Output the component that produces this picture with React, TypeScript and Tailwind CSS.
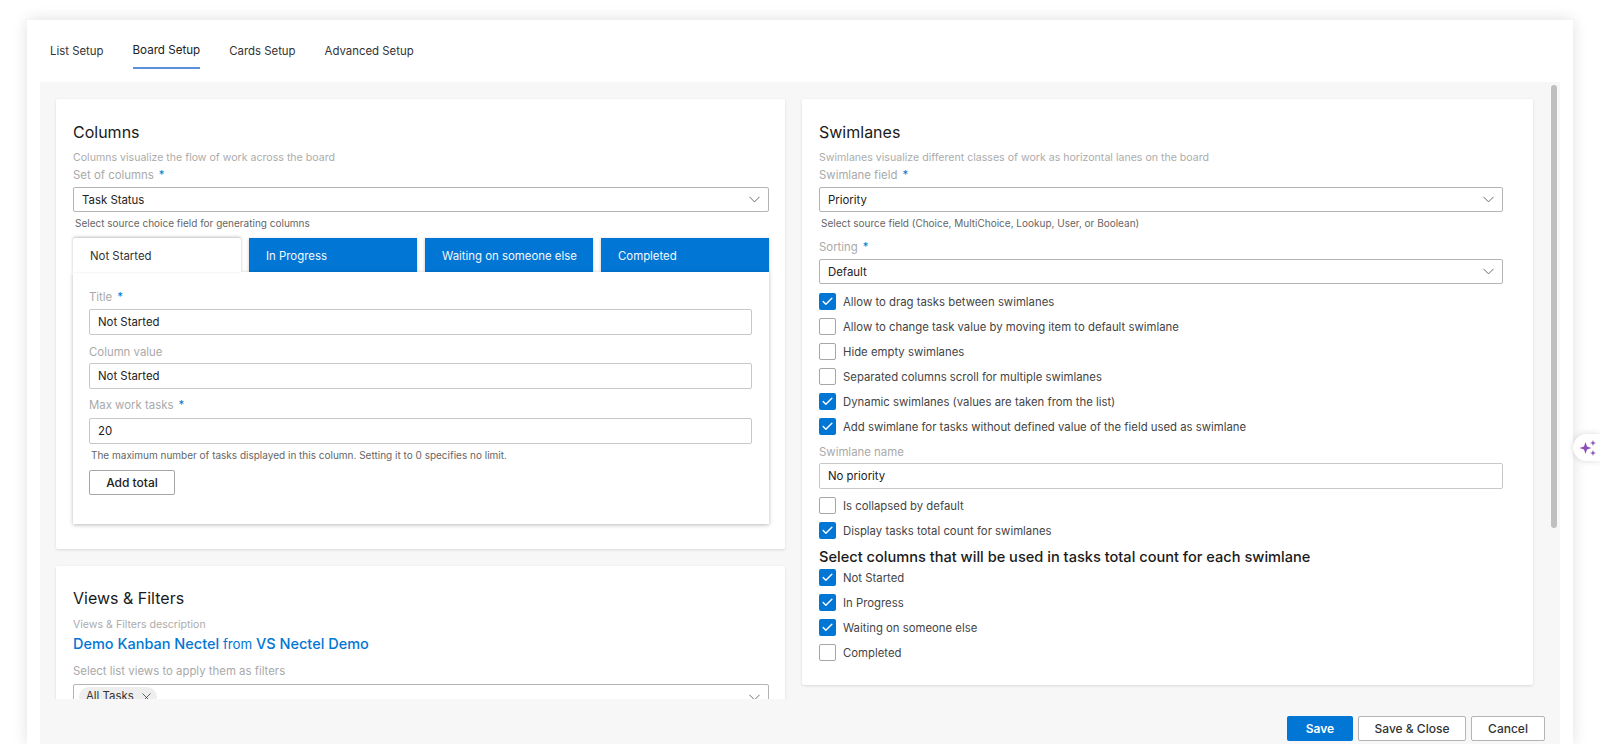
import { ChevronDown, X, Check } from "lucide-react";

function Label({ text, required }: { text: string; required?: boolean }) {
  return (
    <div className="text-[11.4px] leading-[16px] text-[#a9a9a9]">
      {text}
      {required && <span className="ml-[5px] text-[#0078d4]">*</span>}
    </div>
  );
}

function Field({ value }: { value: string }) {
  return (
    <div className="h-[26px] rounded-[2px] border border-[#c8c8c8] bg-white px-[8px] text-[11.4px] leading-[24px] text-[#222]">
      {value}
    </div>
  );
}

function Select({ value }: { value: string }) {
  return (
    <div className="flex h-[25px] items-center justify-between rounded-[2px] border border-[#b4b4b4] bg-white pl-[8px] pr-[4px] text-[11.4px] text-[#222]">
      <span className="mt-[2px]">{value}</span>
      <ChevronDown size={19} strokeWidth={1} className="text-[#444]" />
    </div>
  );
}

function Help({ text }: { text: string }) {
  return <div className="mt-[3px] pl-[2px] text-[10px] leading-[16px] text-[#666]">{text}</div>;
}

function CheckRow({ label, checked }: { label: string; checked?: boolean }) {
  return (
    <div className="flex h-[25px] items-center gap-[7px] text-[11.35px] text-[#444]">
      {checked ? (
        <span className="flex h-[17px] w-[17px] items-center justify-center rounded-[2px] bg-[#0276d4]">
          <Check size={13} strokeWidth={2.6} className="text-white" />
        </span>
      ) : (
        <span className="h-[17px] w-[17px] rounded-[2px] border border-[#a6a6a6] bg-white" />
      )}
      <span className="mt-[2px]">{label}</span>
    </div>
  );
}

function ColumnTab({ label }: { label: string }) {
  return (
    <div className="flex h-[34px] flex-1 items-center bg-[#0276d4] pl-[17px] pt-[3px] text-[11.4px] text-[#f2f8fd] shadow-[0_1px_3px_rgba(0,0,0,0.25)]">
      {label}
    </div>
  );
}

export default function App() {
  return (
    <div className="h-[744px] overflow-hidden bg-white px-[27px] pt-[20px] font-['Inter',sans-serif]">
      <div className="flex h-[724px] flex-col bg-white shadow-[0_0_14px_rgba(0,0,0,0.13)]">
        {/* Tabs */}
        <div className="flex h-[62px] gap-[29px] pl-[23px] text-[11.4px] text-[#333]">
          <div className="pt-[23px]">List Setup</div>
          <div className="h-[49px] border-b-2 border-[#5b8fdc] pt-[22px] text-[11.6px] text-[#222]">Board Setup</div>
          <div className="pt-[23px]">Cards Setup</div>
          <div className="pt-[23px]">Advanced Setup</div>
        </div>

        <div className="relative mx-[13px] flex min-h-0 flex-1 flex-col bg-[#f7f7f7]">
          <div className="flex h-[617px] gap-[17px] overflow-hidden pl-[16px] pt-[17px]">
            {/* Left column */}
            <div className="flex w-[729px] flex-col gap-[17px]">
              <section className="h-[450px] shrink-0 rounded-[2px] bg-white pl-[17px] pr-[16px] pt-[22px] shadow-[0_1px_3px_rgba(0,0,0,0.12)]">
                <h2 className="text-[16px] leading-[22px] text-[#1a1a1a]">Columns</h2>
                <div className="mt-[7px] text-[10.6px] leading-[16px] text-[#acacac]">
                  Columns visualize the flow of work across the board
                </div>
                <div className="mb-[4px] mt-[1px]">
                  <Label text="Set of columns" required />
                </div>
                <Select value="Task Status" />
                <Help text="Select source choice field for generating columns" />
                <div className="mt-[7px] flex gap-[8px]">
                  <div className="relative z-10 flex h-[34px] w-[168px] items-center rounded-t-[2px] bg-white pl-[17px] pt-[3px] text-[11.4px] text-[#333] shadow-[0_-1px_3px_rgba(0,0,0,0.25)]">
                    Not Started
                  </div>
                  <ColumnTab label="In Progress" />
                  <ColumnTab label="Waiting on someone else" />
                  <ColumnTab label="Completed" />
                </div>
                <div className="relative h-[252px] bg-white pl-[16px] pr-[17px] pt-[17px] shadow-[0_1px_4px_rgba(0,0,0,0.28)]">
                  <div className="mb-[4px]">
                    <Label text="Title" required />
                  </div>
                  <Field value="Not Started" />
                  <div className="mb-[3px] mt-[9px]">
                    <Label text="Column value" />
                  </div>
                  <Field value="Not Started" />
                  <div className="mb-[5px] mt-[8px]">
                    <Label text="Max work tasks" required />
                  </div>
                  <Field value="20" />
                  <Help text="The maximum number of tasks displayed in this column. Setting it to 0 specifies no limit." />
                  <div className="mt-[7px] flex h-[25px] w-[86px] items-center justify-center rounded-[2px] border border-[#a6a6a6] text-[12px] font-medium text-[#222]">
                    Add total
                  </div>
                </div>
              </section>

              <section className="h-[200px] shrink-0 rounded-[2px] bg-white pl-[17px] pr-[16px] pt-[21px] shadow-[0_1px_3px_rgba(0,0,0,0.12)]">
                <h2 className="text-[16px] leading-[22px] text-[#1a1a1a]">Views &amp; Filters</h2>
                <div className="mt-[8px] text-[10.6px] leading-[16px] text-[#acacac]">Views &amp; Filters description</div>
                <div className="text-[14.5px] leading-[22px] text-[#0276d4]">
                  <span className="font-medium">Demo Kanban Nectel</span>
                  <span className="text-[13.3px]"> from </span>
                  <span className="font-medium">VS Nectel Demo</span>
                </div>
                <div className="mt-[8px]">
                  <Label text="Select list views to apply them as filters" />
                </div>
                <div className="mt-[5px] flex h-[26px] items-center justify-between rounded-[2px] border border-[#b4b4b4] pl-[5px] pr-[4px]">
                  <span className="flex h-[20px] items-center gap-[5px] rounded-full bg-[#eeeeee] pl-[7px] pr-[3px] text-[11.4px] text-[#333]">
                    All Tasks
                    <X size={15} strokeWidth={1.2} />
                  </span>
                  <ChevronDown size={19} strokeWidth={1} className="text-[#444]" />
                </div>
              </section>
            </div>

            {/* Right column */}
            <section className="h-[586px] w-[731px] shrink-0 rounded-[2px] bg-white px-[17px] pt-[22px] shadow-[0_1px_3px_rgba(0,0,0,0.12)]">
              <h2 className="text-[16px] leading-[22px] text-[#1a1a1a]">Swimlanes</h2>
              <div className="mt-[7px] text-[10.6px] leading-[16px] text-[#acacac]">
                Swimlanes visualize different classes of work as horizontal lanes on the board
              </div>
              <div className="mb-[4px] mt-[1px]">
                <Label text="Swimlane field" required />
              </div>
              <div className="w-[684px]">
                <Select value="Priority" />
                <Help text="Select source field (Choice, MultiChoice, Lookup, User, or Boolean)" />
                <div className="mb-[4px] mt-[8px]">
                  <Label text="Sorting" required />
                </div>
                <Select value="Default" />
                <div className="mt-[5px]">
                  <CheckRow checked label="Allow to drag tasks between swimlanes" />
                  <CheckRow label="Allow to change task value by moving item to default swimlane" />
                  <CheckRow label="Hide empty swimlanes" />
                  <CheckRow label="Separated columns scroll for multiple swimlanes" />
                  <CheckRow checked label="Dynamic swimlanes (values are taken from the list)" />
                  <CheckRow checked label="Add swimlane for tasks without defined value of the field used as swimlane" />
                </div>
                <div className="mb-[3px] mt-[5px]">
                  <Label text="Swimlane name" />
                </div>
                <Field value="No priority" />
                <div className="mt-[4px]">
                  <CheckRow label="Is collapsed by default" />
                  <CheckRow checked label="Display tasks total count for swimlanes" />
                </div>
                <div className="mt-[7px] text-[14.6px] font-medium leading-[15px] text-[#1a1a1a]">
                  Select columns that will be used in tasks total count for each swimlane
                </div>
                <CheckRow checked label="Not Started" />
                <CheckRow checked label="In Progress" />
                <CheckRow checked label="Waiting on someone else" />
                <CheckRow label="Completed" />
              </div>
            </section>
          </div>

          {/* Scrollbar */}
          <div className="absolute right-[3px] top-[3px] h-[443px] w-[6px] rounded-full bg-[#bfbfbf]" />

          {/* Footer */}
          <div className="flex justify-end gap-[5px] pr-[15px] pt-[17px] text-[12px]">
            <div className="flex h-[25px] w-[66px] items-center justify-center rounded-[2px] bg-[#0276d4] font-semibold text-white">
              Save
            </div>
            <div className="flex h-[25px] w-[108px] items-center justify-center rounded-[2px] border border-[#b4b4b4] bg-white font-medium text-[#333]">
              Save &amp; Close
            </div>
            <div className="flex h-[25px] w-[74px] items-center justify-center rounded-[2px] border border-[#b4b4b4] bg-white font-medium text-[#333]">
              Cancel
            </div>
          </div>
        </div>
      </div>

      {/* Copilot button */}
      <div className="absolute right-0 top-[434px] flex h-[27px] w-[27px] items-center rounded-l-full bg-white pl-[5px] shadow-[0_0_6px_rgba(0,0,0,0.15)]">
        <svg width="22" height="22" viewBox="0 0 22 22" fill="#8a50b8">
          <path d="M7.5 5 L9 9.5 L13.5 11 L9 12.5 L7.5 17 L6 12.5 L1.5 11 L6 9.5 Z" />
          <path d="M15 3 L15.8 5.2 L18 6 L15.8 6.8 L15 9 L14.2 6.8 L12 6 L14.2 5.2 Z" />
          <path d="M15 13 L15.8 15.2 L18 16 L15.8 16.8 L15 19 L14.2 16.8 L12 16 L14.2 15.2 Z" />
        </svg>
      </div>
    </div>
  );
}
